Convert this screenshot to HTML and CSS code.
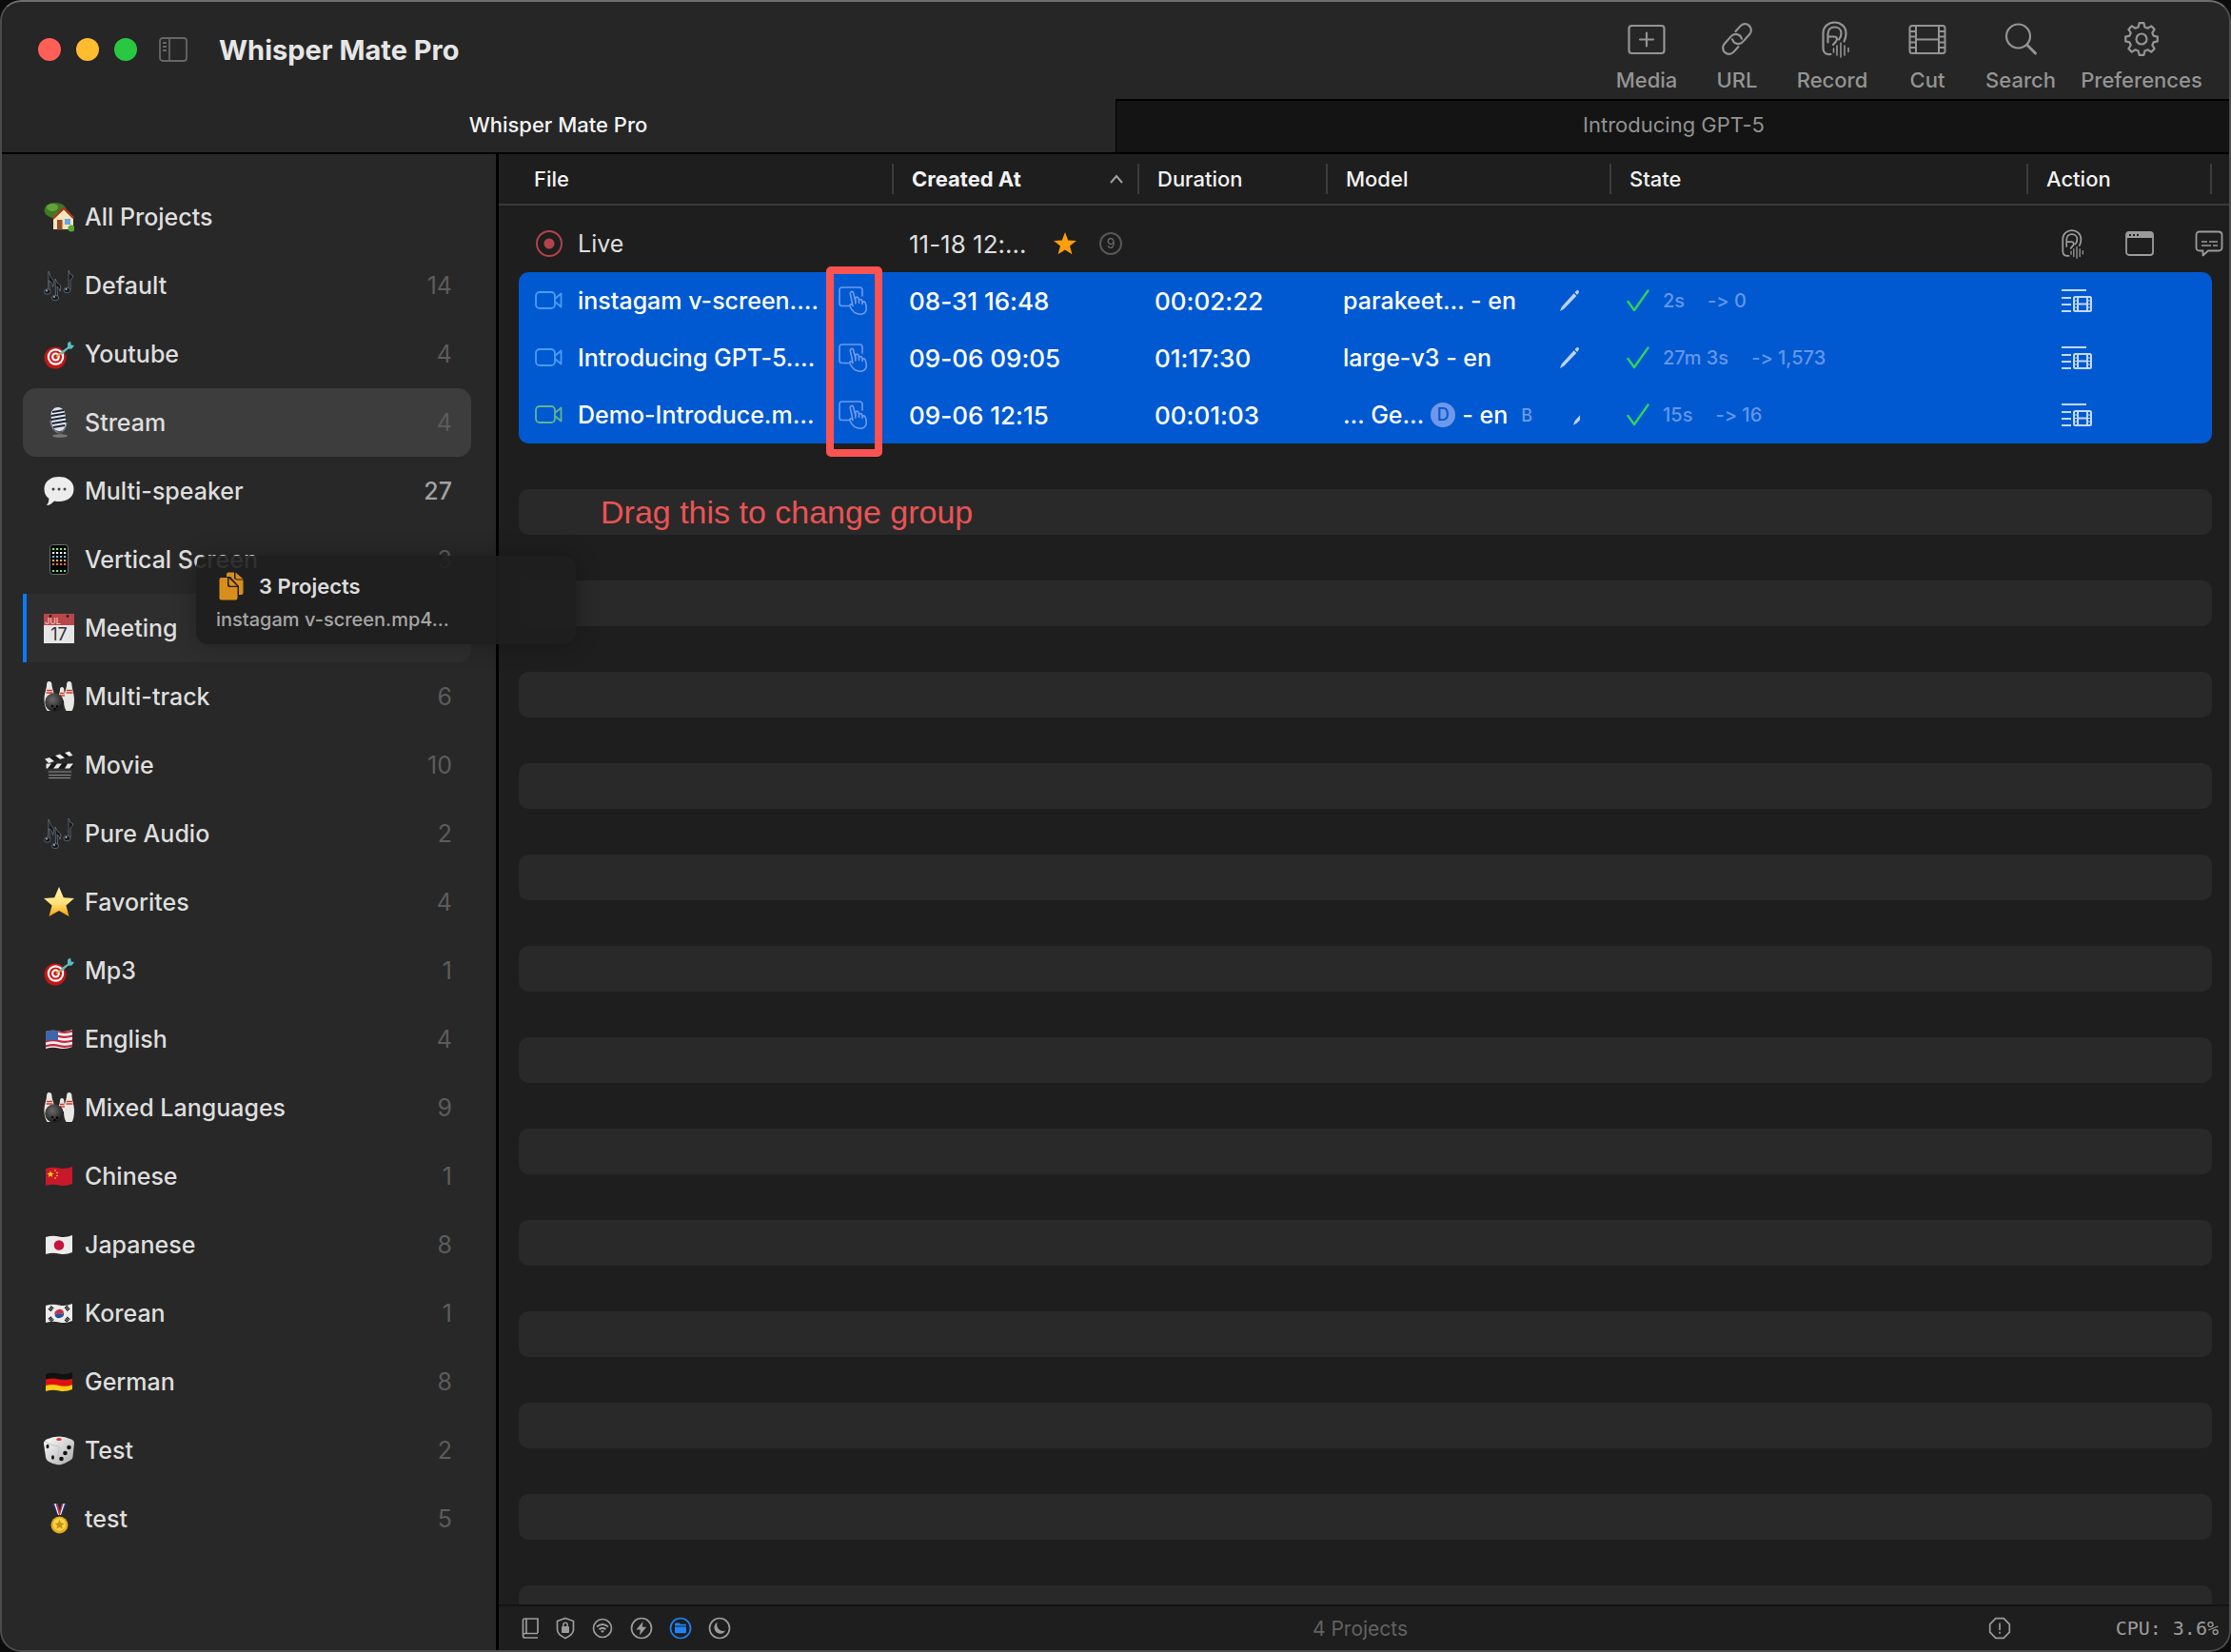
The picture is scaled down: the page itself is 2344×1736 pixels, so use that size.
FILE: index.html
```html
<!DOCTYPE html>
<html lang="en">
<head>
<meta charset="utf-8">
<title>Whisper Mate Pro</title>
<link rel="stylesheet" href="styles.css">
</head>
<body>
<svg class="sprite" aria-hidden="true">
  <defs>
    <linearGradient id="gold" x1="0" y1="0" x2="0" y2="1"><stop offset="0" stop-color="#fff6b0"/><stop offset=".55" stop-color="#ffe27a"/><stop offset="1" stop-color="#f5a300"/></linearGradient>
    <linearGradient id="silver" x1="0" y1="0" x2="1" y2="1"><stop offset="0" stop-color="#fff"/><stop offset="1" stop-color="#a9a9a9"/></linearGradient>
    <radialGradient id="ball" cx=".4" cy=".35" r=".7"><stop offset="0" stop-color="#6a6a6a"/><stop offset="1" stop-color="#161616"/></radialGradient>
    <clipPath id="flag"><path d="M2 8Q9 6 16 7.500T30 6V24Q23 27 16 25.500T2 26Z"/></clipPath>
  </defs>
  <symbol id="ear" viewBox="0 0 40 40"><g fill="none" stroke="currentColor" stroke-width="2.200" stroke-linecap="round"><path d="M32.500 22.500c1.500-3 2-6 2-8.500C34.500 7 29 2.500 22.500 2.500S10.500 7 10.500 14v16c0 4.500 3 6.800 8 6"/><path d="M15.500 23.500V15c0-5 3-7.500 7-7.500s7 2.500 7 6.500c0 3-1 5-2.500 6.500M16 17.500h6c3.500 0 3.500 3.500 2 5l-3 3.500"/><path stroke-width="1.600" d="M21.500 30v4M25 27v10M29 24v15M33 27v10M37 29.500v4"/></g></symbol>
  <symbol id="film" viewBox="0 0 40 40"><g fill="none" stroke="currentColor" stroke-width="2"><rect x="1.500" y="6" width="37" height="29" rx="2.500"/><path d="M8 6v29M32 6v29M8 20.500h24M1.500 12H8M1.500 17.500H8M1.500 23.500H8M1.500 29H8M32 12h6.500M32 17.500h6.500M32 23.500h6.500M32 29h6.500"/></g></symbol>
  <symbol id="video" viewBox="0 0 30 24"><g fill="none" stroke="currentColor" stroke-width="1.800" stroke-linejoin="round"><rect x="1" y="3" width="20" height="17" rx="4"/><path d="M21 10l6.500-5.500v14L21 13"/></g></symbol>
  <symbol id="hand" viewBox="0 0 32 30"><g fill="none" stroke="currentColor" stroke-width="1.600" stroke-linejoin="round" stroke-linecap="round"><path d="M10.500 20.500h-7A2.500 2.500 0 0 1 1 18V3.500A2.500 2.500 0 0 1 3.500 1h19A2.500 2.500 0 0 1 25 3.500V10"/><path d="M15 20.500L12.300 7.700c-.4-2.600 2.700-3.200 3.300-.8l2.200 8.600v-3c.4-1.900 3-1.700 3.300.2l.4 2c.3-1.700 2.800-1.500 3.200.3l.4 1.700c.7-1.400 2.700-1 3.100.8 2.300 6 1 11.500-5 11.700-6 .2-8.700-2.700-11.200-8.200-.8-2.500 1.600-3.200 3-.5z"/><path d="M17.800 15.500v2.500M21.500 15v2.500M25.100 17v1.500"/></g></symbol>
  <symbol id="pencil" viewBox="0 0 24 26"><path d="M1 25l2-5L17 4.500l3 3L5.500 22.500zM18 3.500l2.200-2.300q1.500-.7 2.300.3t.3 2L20.800 6.500z" fill="currentColor"/></symbol>
  <symbol id="check" viewBox="0 0 24 24"><path d="M1.500 13l6.500 9L22.500 1.500" fill="none" stroke="currentColor" stroke-width="2.400" stroke-linecap="round" stroke-linejoin="round"/></symbol>
  <symbol id="script" viewBox="0 0 32 26"><g fill="none" stroke="currentColor" stroke-width="2"><path d="M0 2h26M0 10h10M0 17h10M0 24h10"/><rect x="13" y="9" width="18" height="15" rx="1.500"/><path d="M17 9v15M27 9v15M17 16.500h10"/><path stroke-width="1" d="M13 13h4M13 16.500h4M13 20h4M27 13h4M27 16.500h4M27 20h4"/></g></symbol>
  <symbol id="e-house" viewBox="0 0 32 32"><ellipse cx="12" cy="9" rx="11.500" ry="8" fill="#3d7a22"/><ellipse cx="9" cy="6" rx="6" ry="4" fill="#63a33a"/><path d="M10 16l11-10 10 10v13H10z" fill="#f3e5bd"/><path d="M8.500 17L21 5l11 11.500-1.500 1.500L21 8.500 10.500 18.500z" fill="#a63a1e"/><rect x="14" y="19" width="5.500" height="10.500" fill="#9c4a25"/><rect x="22" y="18" width="6" height="6" fill="#6aa7e0"/><circle cx="29" cy="28" r="3.500" fill="#5da436"/></symbol>
  <symbol id="e-notes" viewBox="0 0 32 32"><g fill="#15181c" stroke="#69727c" stroke-width=".8"><path d="M5 1q1 5 5 9.500 1.500 3-.5 7 0-4.500-4-7l1 11.500h-2z"/><path d="M12 9q1 4 5.500 7 1 3-.5 6-.5-3-3-5l.5 10.500h-2z"/><path d="M26 0q1 5 5 6-1 3-3 4v10h-2z"/><ellipse cx="3.800" cy="22.500" rx="3.400" ry="2.700"/><ellipse cx="12" cy="29" rx="3.600" ry="2.700"/><ellipse cx="24.500" cy="21" rx="3.600" ry="2.700"/></g><g fill="#b5cbe0"><circle cx="3" cy="21.500" r=".9"/><circle cx="11" cy="28" r=".9"/><circle cx="23.500" cy="20" r=".9"/></g></symbol>
  <symbol id="e-dart" viewBox="0 0 32 32"><ellipse cx="12" cy="20" rx="11.500" ry="11.500" fill="#c21717"/><ellipse cx="12.500" cy="19" rx="8.700" ry="8.700" fill="#fff"/><ellipse cx="12.500" cy="19" rx="6.600" ry="6.600" fill="#cb1c1c"/><ellipse cx="12.500" cy="19" rx="4.400" ry="4.500" fill="#fff"/><ellipse cx="12.500" cy="19" rx="2.300" ry="2.400" fill="#cb1c1c"/><path d="M13 19L25 10" stroke="#e5a52d" stroke-width="1.600"/><path d="M17 14.500l8-5.500L25 4.500l3-2 .8 4L32 7l-2.500 3.500-4 .2-6.500 6z" fill="#55bfc5"/></symbol>
  <symbol id="e-mic" viewBox="0 0 32 32"><rect x="8" y="0" width="15" height="25" rx="7.500" fill="#dfe5ef" transform="rotate(-6 16 12)"/><g stroke="#1c2230" stroke-width="1.800"><path d="M9 5l12-2M7.500 9l15-2.500M8 13l15-2.500M9 17l15-2.500M10 21l12-2"/></g><path d="M7 14q1 10 9 13 7-2 8-11" fill="none" stroke="#7c7f86" stroke-width="1.600"/><path d="M15 25h4v4h-4z" fill="#555"/><ellipse cx="17" cy="30" rx="8" ry="1.800" fill="#777"/></symbol>
  <symbol id="e-speech" viewBox="0 0 32 32"><path d="M16 1c9 0 15.500 5 15.500 13S25 27 16 27c-2 0-3.500-.2-5-.6Q7.500 30.500 3 31q2.500-3 2.500-7Q.5 20.500.5 14C.5 6 7 1 16 1z" fill="#ececec"/><g fill="#444"><circle cx="10" cy="14" r="1.500"/><circle cx="16" cy="14" r="1.500"/><circle cx="22" cy="14" r="1.500"/></g></symbol>
  <symbol id="e-phone" viewBox="0 0 32 32"><rect x="6.500" y=".5" width="19" height="31" rx="3" fill="#050505" stroke="#6f6f6f"/><g stroke-width="2.200" stroke-dasharray="2.200 1.800"><path d="M9 5h15" stroke="#7ee07e"/><path d="M9 9h15" stroke="#f4f4f4"/><path d="M9 13h15" stroke="#6cc1f2"/><path d="M9 17h15" stroke="#f5b35b"/><path d="M9 21h15" stroke="#ef6c6c"/><path d="M9 28h15" stroke="#5fe08c"/></g></symbol>
  <symbol id="e-bowl" viewBox="0 0 32 32"><g fill="#e9e7e3"><path d="M5.500 0q3 0 3 4c0 3 3 8 3 15s-1 10-2 12h-6C2 28 .5 25 .5 19s2.500-12 2.500-15q0-4 2.500-4z"/><path d="M26.500 0q3 0 3 4c0 3 2.500 9 2.500 15s-1 10-2.500 12h-6C22 28 21 25 21 19s3-12 3-15q0-4 2.500-4z"/><path d="M19 6q2.300 0 2.300 3c0 3 1.700 6 1.700 11h-8c0-5 2-8 2-11q0-3 2-3z"/></g><path d="M3 9.500h6M2.700 12h6.800M23.700 9.500H30M23.500 12h7M17 12.500h4.500M17 15h5" stroke="#d33b2c" stroke-width="1.300"/><circle cx="11" cy="22" r="9.800" fill="url(#ball)"/><circle cx="9" cy="26" r="1.200"/><circle cx="14" cy="26.500" r="1.200"/><circle cx="11.500" cy="29" r="1.200"/></symbol>
  <symbol id="e-clap" viewBox="0 0 32 32"><path d="M3 16h28l-2 15H4.500z" fill="#303030"/><path d="M1 9.500L28 1l2.500 5L4 14z" fill="#191919"/><path d="M1 9.500l5-1.500 5 4-6 2zM12 6l5-1.600 5 4-5 1.400zM22 3l5-1.500 3.500 4.500-4 .8z" fill="#e9e9e9"/><path d="M3 14.500h28v5H3z" fill="#191919"/><path d="M2.500 14.500H8l-4 5H2.500zM14 14.500h5l-4 5h-5zM25 14.500h6l-4 5h-5z" fill="#e9e9e9"/><path d="M5 23h24M5 26.500h23.500M5 29.500h23" stroke="#8a8a8a"/></symbol>
  <symbol id="e-star" viewBox="0 0 32 32"><path d="M16 0l4.800 11.300L32 12l-8.600 7.600L26.500 31 16 25 5.500 31l3.100-11.400L0 12l11.200-.7z" fill="url(#gold)"/></symbol>
  <symbol id="e-us" viewBox="0 0 32 32"><g clip-path="url(#flag)"><path d="M0 5h32v23H0z" fill="#f0f0f0"/><path d="M0 9Q9 6 16 8t16-1M0 14q9-3 16-1t16-1M0 19q9-3 16-1t16-1M0 24q9-3 16-1t16-1" fill="none" stroke="#c9263c" stroke-width="2.300"/><path d="M0 5h15v12Q8 16.500 0 18z" fill="#3f66ad"/></g></symbol>
  <symbol id="e-cn" viewBox="0 0 32 32"><g clip-path="url(#flag)"><path d="M0 5h32v23H0z" fill="#c8192b"/><path d="M7 10.500l1 2.300 2.500.1-2 1.600.7 2.500L7 15.500 4.800 17l.7-2.500-2-1.600 2.500-.1z" fill="#fcdc1e"/><g fill="#fcdc1e"><circle cx="12" cy="10" r=".8"/><circle cx="14" cy="12.500" r=".8"/><circle cx="14" cy="15.500" r=".8"/><circle cx="12" cy="18" r=".8"/></g></g></symbol>
  <symbol id="e-jp" viewBox="0 0 32 32"><g clip-path="url(#flag)"><path d="M0 5h32v23H0z" fill="#ececec"/><circle cx="16" cy="16.500" r="5.300" fill="#c4153d"/></g></symbol>
  <symbol id="e-kr" viewBox="0 0 32 32"><g clip-path="url(#flag)"><path d="M0 5h32v23H0z" fill="#ececec"/><path d="M11.500 18a5 5 0 0 1 9.500-3q-2.500 3-4.700 1.500t-4.800 1.500z" fill="#cc2d43"/><path d="M11.500 18q2.500-3 4.800-1.500T21 15a5 5 0 0 1-9.500 3z" fill="#28529c"/><path d="M6 13l3.500-4M23 9l3.500 4M6 20.500l3.500 4M23 24.500l3.500-4" stroke="#111" stroke-width="4" stroke-dasharray="1.300 .5"/></g></symbol>
  <symbol id="e-de" viewBox="0 0 32 32"><g clip-path="url(#flag)"><path d="M0 5h32v8H0z" fill="#111"/><path d="M0 14Q9 11.500 16 13.500T32 12v9H0z" fill="#dd1111"/><path d="M0 20.500q9-2.500 16-.5t16-1.500v10H0z" fill="#fccc16"/></g></symbol>
  <symbol id="e-dice" viewBox="0 0 32 32"><path d="M3 4.500Q16-1.500 29 4.500q3 1 3 4L30.500 23q-.3 2.500-2.500 3.500-6 3.500-9.500 4.500-2.500.7-5 0-6-1.500-9-3.500-2-1.500-2.500-4L0 9Q0 6 3 4.500z" fill="url(#silver)"/><path d="M1 6.500q5 4 15 5.500-1 8-.5 19" fill="none" stroke="#c4c4c4"/><ellipse cx="16" cy="4.500" rx="2.800" ry="1.500" fill="#e03434"/><g fill="#141414"><ellipse cx="4" cy="12" rx="1.500" ry="2.300"/><ellipse cx="9.500" cy="23.500" rx="1.500" ry="2.300"/><circle cx="26.500" cy="13" r="2.300"/><circle cx="22.500" cy="19" r="2.300"/><circle cx="18.500" cy="25" r="2.300"/></g></symbol>
  <symbol id="e-medal" viewBox="0 0 32 32"><path d="M9 0h5l4 12h-3.500zM24 0h-5l-4 12h3.500z" fill="#2a3b8f"/><path d="M11 0h1.500l4 12H15zM22 0h-1.500l-4 12H18z" fill="#f3f3f3"/><path d="M13 0h1.500l2.500 9 2-9H20l-3 12h-1z" fill="#cf2f3a"/><circle cx="16.500" cy="22.500" r="9" fill="#e3aa1d"/><circle cx="16.500" cy="22" r="6.800" fill="#f8d548"/><path d="M16.500 17l1.500 3.500 3.500.3-2.600 2.400.8 3.600-3.200-2-3.200 2 .8-3.600-2.600-2.400 3.500-.3z" fill="#c98f14"/></symbol>
</svg>

<div class="app">
  <header class="titlebar">
    <div class="lights">
      <button class="light red" aria-label="Close"></button>
      <button class="light amber" aria-label="Minimize"></button>
      <button class="light green" aria-label="Zoom"></button>
    </div>
    <button class="panel-toggle" aria-label="Toggle sidebar"><svg width="30" height="26" viewBox="0 0 30 26" fill="none" stroke="currentColor" stroke-width="1.800"><rect x="1" y="1" width="28" height="24" rx="3"/><path d="M11 1v24M4 6h4M4 10h4M4 14h4"/></svg></button>
    <h1 class="app-title">Whisper Mate Pro</h1>
    <div class="toolbar">
      <button class="tool"><svg class="tool-icon" viewBox="0 0 40 40" fill="none" stroke="currentColor" stroke-width="2.200" stroke-linecap="round"><rect x="1.500" y="6" width="37" height="29" rx="3"/><path d="M13 20.500h14M20 13.500v14"/></svg>Media</button>
      <button class="tool"><svg class="tool-icon" viewBox="0 0 40 40" fill="none" stroke="currentColor" stroke-width="2.200" stroke-linecap="round"><g transform="rotate(-48 20 20)"><path d="M15 26.500H7.500a6.500 6.500 0 0 1 0-13H18a6.500 6.500 0 0 1 5.500 10"/><path d="M25 13.500h7.500a6.500 6.500 0 0 1 0 13H22a6.500 6.500 0 0 1-5.500-10"/></g></svg>URL</button>
      <button class="tool"><svg class="tool-icon"><use href="#ear"/></svg>Record</button>
      <button class="tool"><svg class="tool-icon"><use href="#film"/></svg>Cut</button>
      <button class="tool"><svg class="tool-icon" viewBox="0 0 40 40" fill="none" stroke="currentColor" stroke-width="2.200" stroke-linecap="round"><circle cx="17.500" cy="17" r="12.500"/><path d="M26.500 26L35.500 35" stroke-width="3"/></svg>Search</button>
      <button class="tool"><svg class="tool-icon" viewBox="0 0 40 40" fill="none" stroke="currentColor" stroke-width="2.200" stroke-linejoin="round"><path d="M22.400 3.200L23.400 7.400 26.500 8.700 30.200 6.400 33.600 9.800 31.300 13.500 32.600 16.600 36.800 17.600V22.400L32.600 23.400 31.300 26.500 33.600 30.200 30.200 33.600 26.500 31.300 23.400 32.600 22.400 36.800H17.600L16.600 32.600 13.500 31.300 9.800 33.600 6.400 30.200 8.700 26.500 7.400 23.400 3.200 22.400V17.600L7.400 16.600 8.700 13.500 6.400 9.800 9.800 6.400 13.500 8.700 16.600 7.400 17.600 3.200Z"/><circle cx="20" cy="20" r="5.500"/></svg>Preferences</button>
    </div>
  </header>
  <nav class="tabs" aria-label="Windows">
    <button class="tab active">Whisper Mate Pro</button>
    <button class="tab">Introducing GPT-5</button>
  </nav>

  <div class="body">
    <nav class="sidebar" aria-label="Groups">
      <button class="group"><svg class="emoji"><use href="#e-house"/></svg><span>All Projects</span></button>
      <button class="group"><svg class="emoji"><use href="#e-notes"/></svg><span>Default</span><span class="count">14</span></button>
      <button class="group"><svg class="emoji"><use href="#e-dart"/></svg><span>Youtube</span><span class="count">4</span></button>
      <button class="group selected"><svg class="emoji"><use href="#e-mic"/></svg><span>Stream</span><span class="count">4</span></button>
      <button class="group"><svg class="emoji"><use href="#e-speech"/></svg><span>Multi-speaker</span><span class="count strong">27</span></button>
      <button class="group"><svg class="emoji"><use href="#e-phone"/></svg><span>Vertical Screen</span><span class="count">3</span></button>
      <button class="group drop"><svg class="emoji" viewBox="0 0 32 32"><path d="M0 1h32v31H0z" fill="#e6e6e6"/><path d="M0 1h32v12H0z" fill="#b9474a"/><circle cx="7" cy="3.500" r="1.400" fill="#222"/><circle cx="25" cy="3.500" r="1.400" fill="#222"/><text x="1" y="12" class="cal-month">JUL</text><text x="16" y="29" text-anchor="middle" class="cal-day">17</text></svg><span>Meeting</span></button>
      <button class="group"><svg class="emoji"><use href="#e-bowl"/></svg><span>Multi-track</span><span class="count">6</span></button>
      <button class="group"><svg class="emoji"><use href="#e-clap"/></svg><span>Movie</span><span class="count">10</span></button>
      <button class="group"><svg class="emoji"><use href="#e-notes"/></svg><span>Pure Audio</span><span class="count">2</span></button>
      <button class="group"><svg class="emoji"><use href="#e-star"/></svg><span>Favorites</span><span class="count">4</span></button>
      <button class="group"><svg class="emoji"><use href="#e-dart"/></svg><span>Mp3</span><span class="count">1</span></button>
      <button class="group"><svg class="emoji"><use href="#e-us"/></svg><span>English</span><span class="count">4</span></button>
      <button class="group"><svg class="emoji"><use href="#e-bowl"/></svg><span>Mixed Languages</span><span class="count">9</span></button>
      <button class="group"><svg class="emoji"><use href="#e-cn"/></svg><span>Chinese</span><span class="count">1</span></button>
      <button class="group"><svg class="emoji"><use href="#e-jp"/></svg><span>Japanese</span><span class="count">8</span></button>
      <button class="group"><svg class="emoji"><use href="#e-kr"/></svg><span>Korean</span><span class="count">1</span></button>
      <button class="group"><svg class="emoji"><use href="#e-de"/></svg><span>German</span><span class="count">8</span></button>
      <button class="group"><svg class="emoji"><use href="#e-dice"/></svg><span>Test</span><span class="count">2</span></button>
      <button class="group"><svg class="emoji"><use href="#e-medal"/></svg><span>test</span><span class="count">5</span></button>
    </nav>

    <main class="main">
      <table class="projects">
        <colgroup><col class="c-file"><col class="c-created"><col class="c-duration"><col class="c-model"><col class="c-state"><col class="c-action"></colgroup>
        <thead>
          <tr><th>File</th><th class="sorted"><span class="cell">Created At<svg class="caret" width="14" height="10" viewBox="0 0 14 10"><path d="M1 9l6-7 6 7" fill="none" stroke="currentColor" stroke-width="2"/></svg></span></th><th>Duration</th><th>Model</th><th>State</th><th>Action</th></tr>
        </thead>
        <tbody>
          <tr class="live">
            <td><div class="cell name"><svg class="rec" width="30" height="30" viewBox="0 0 30 30"><circle cx="15" cy="15" r="13" fill="none" stroke="currentColor" stroke-width="2"/><circle cx="15" cy="15" r="5.500" fill="currentColor"/></svg><span>Live</span></div></td>
            <td class="num"><div class="cell"><span>11-18 12:…</span><span class="marks"><svg width="24" height="24" viewBox="0 0 24 24"><path d="M12 0l3.200 8.500 8.800.4-7 5.600 2.400 8.800L12 18.500l-7.400 4.800L7 14.500 0 8.900l8.800-.4z" fill="#ff9f0a"/></svg><span class="ring">9</span></span></div></td>
            <td></td><td></td><td></td>
            <td><div class="cell live-actions">
              <button class="act" aria-label="Record"><svg width="24" height="31" viewBox="9 1 30 39"><use href="#ear" width="40" height="40"/></svg></button>
              <button class="act" aria-label="Window"><svg width="30" height="30" viewBox="0 0 30 30"><rect x="1" y="3" width="28" height="24" rx="3" fill="none" stroke="currentColor" stroke-width="1.800"/><path d="M1 9V6q0-3 3-3h22q3 0 3 3v3z" fill="currentColor"/><path d="M4 6h2M8 6h2M12 6h2" stroke="#1e1e1e" stroke-width="2"/></svg></button>
              <button class="act" aria-label="Captions"><svg width="30" height="30" viewBox="0 0 30 30" fill="none" stroke="currentColor" stroke-width="1.800" stroke-linejoin="round"><path d="M5 2.500h20q3.500 0 3.500 3.500v13q0 3.500-3.500 3.500H14l-5.500 5v-5H5q-3.500 0-3.500-3.500V6q0-3.500 3.500-3.500z"/><path stroke-width="1.500" d="M7 13h6M15 13h9M7 17h10M19 17h5"/></svg></button>
            </div></td>
          </tr>
          <tr class="picked first">
            <td><div class="cell name"><svg class="vid" width="30" height="24"><use href="#video"/></svg><span>instagam v-screen.…</span><svg class="grip" width="32" height="30"><use href="#hand"/></svg></div></td>
            <td class="num">08-31 16:48</td><td class="num">00:02:22</td>
            <td><div class="cell"><span>parakeet… - en</span><button class="edit" aria-label="Edit"><svg width="22" height="24"><use href="#pencil"/></svg></button></div></td>
            <td><div class="cell state"><svg class="ok" width="24" height="24"><use href="#check"/></svg><span>2s</span><span class="lines">-&gt; 0</span></div></td>
            <td><button class="act" aria-label="Open"><svg width="32" height="26"><use href="#script"/></svg></button></td>
          </tr>
          <tr class="picked">
            <td><div class="cell name"><svg class="vid" width="30" height="24"><use href="#video"/></svg><span>Introducing GPT-5.…</span><svg class="grip" width="32" height="30"><use href="#hand"/></svg></div></td>
            <td class="num">09-06 09:05</td><td class="num">01:17:30</td>
            <td><div class="cell"><span>large-v3 - en</span><button class="edit" aria-label="Edit"><svg width="22" height="24"><use href="#pencil"/></svg></button></div></td>
            <td><div class="cell state"><svg class="ok" width="24" height="24"><use href="#check"/></svg><span>27m 3s</span><span class="lines">-&gt; 1,573</span></div></td>
            <td><button class="act" aria-label="Open"><svg width="32" height="26"><use href="#script"/></svg></button></td>
          </tr>
          <tr class="picked last">
            <td><div class="cell name"><svg class="vid green-vid" width="30" height="24"><use href="#video"/></svg><span>Demo-Introduce.m…</span><svg class="grip" width="32" height="30"><use href="#hand"/></svg></div></td>
            <td class="num">09-06 12:15</td><td class="num">00:01:03</td>
            <td><div class="cell model-tags"><span>… Ge…</span><span class="disc">D</span><span>- en</span><span class="tag">B</span><button class="edit" aria-label="Edit"><svg width="8" height="24" viewBox="0 0 9 26"><use href="#pencil" width="24" height="26"/></svg></button></div></td>
            <td><div class="cell state"><svg class="ok" width="24" height="24"><use href="#check"/></svg><span>15s</span><span class="lines">-&gt; 16</span></div></td>
            <td><button class="act" aria-label="Open"><svg width="32" height="26"><use href="#script"/></svg></button></td>
          </tr>
        </tbody>
      </table>

      <div class="stripes" aria-hidden="true"><i></i><i></i><i></i><i></i><i></i><i></i><i></i><i></i><i></i><i></i><i></i><i></i><i></i></div>

      <div class="frame"></div>
      <p class="hint">Drag this to change group</p>

      <footer class="status">
        <div class="status-icons">
          <button class="st" aria-label="Library"><svg width="20" height="24" viewBox="2 0 20 24" fill="none" stroke="currentColor" stroke-width="1.700"><path d="M20 17V2H6Q4.500 2 4.500 4v16q0 2 2 2H20M4.500 20q0-2.500 2-2.500h13.500M8 2v15.500"/></svg></button>
          <button class="st" aria-label="Privacy"><svg width="20" height="24" viewBox="2 0 20 24"><path d="M12 1.500l8.500 3v9q0 5-8.500 9-8.500-4-8.500-9v-9z" fill="none" stroke="currentColor" stroke-width="1.700"/><rect x="8" y="10" width="8" height="7" rx="1" fill="currentColor"/><path d="M9.800 10V8.500a2.200 2.200 0 0 1 4.400 0V10" fill="none" stroke="currentColor" stroke-width="1.500"/></svg></button>
          <button class="st" aria-label="Network"><svg width="24" height="24" viewBox="0 0 24 24" fill="none" stroke="currentColor" stroke-width="1.700"><circle cx="12" cy="12" r="9.500"/><path d="M6 10.500q6-5 12 0M8.500 13.300q3.500-2.800 7 0" stroke-width="2"/><path d="M10 15q2-1.500 4 0l-2 2z" fill="currentColor" stroke="none"/></svg></button>
          <button class="st" aria-label="Power"><svg width="24" height="24" viewBox="0 0 24 24"><circle cx="12" cy="12" r="10.500" fill="none" stroke="currentColor" stroke-width="1.700"/><path d="M13.500 5L6.500 13.500h4.300L10 19.500l7.200-8.800h-4.400z" fill="currentColor"/></svg></button>
          <button class="st on" aria-label="Folder"><svg width="24" height="24" viewBox="0 0 24 24"><circle cx="12" cy="12" r="10.500" fill="none" stroke="currentColor" stroke-width="1.700"/><path d="M6 7.500q0-1 1-1h3.500l1.500 1.300h5q1 0 1 1V9.500H6zM6 10.500h12V16q0 1.200-1.200 1.200H7.200Q6 17.200 6 16z" fill="currentColor"/></svg></button>
          <button class="st" aria-label="Sleep"><svg width="24" height="24" viewBox="0 0 24 24"><circle cx="12" cy="12" r="10.500" fill="none" stroke="currentColor" stroke-width="1.700"/><path d="M9.800 5.800a6.300 6.300 0 1 0 8.400 8.600 6.500 6.500 0 0 1-8.400-8.600z" fill="currentColor"/></svg></button>
        </div>
        <span class="total">4 Projects</span>
        <div class="status-right">
          <button class="st" aria-label="Alerts"><svg width="24" height="24" viewBox="0 0 24 24" fill="none" stroke="currentColor" stroke-width="1.700"><path d="M7.800 1.700h8.400l6.100 6.100v8.400l-6.100 6.100H7.800l-6.100-6.100V7.800zM12 6.500v7.500M12 15.800v2"/></svg></button>
          <span class="cpu">CPU: 3.6%</span>
        </div>
      </footer>
    </main>
  </div>

  <div class="drag-card">
    <div class="drag-title"><svg width="26" height="30" viewBox="0 0 26 30"><path d="M8 5V2.500Q8 .5 10 .5h6v6.500l3 1.500h6.500V22q0 2-2 2H21V15L12 5z" fill="#d98e1c"/><path d="M17.500.5L25.500 7.500h-6q-2 0-2-2z" fill="#d98e1c"/><path d="M.5 8q0-2 2-2H9v8q0 2 2 2h8.500v11.500q0 2-2 2h-15q-2 0-2-2z" fill="#d98e1c"/><path d="M10.500 6.500l8.500 8.200h-6.500q-2 0-2-2z" fill="#d98e1c"/></svg>3 Projects</div>
    <div class="drag-sub">instagam v-screen.mp4...</div>
  </div>
</div>
</body>
</html>
```
FILE: styles.css
```css
* { box-sizing: border-box; }

body {
  margin: 0;
  background: #0c0c0c;
  color: #dedede;
  font-family: Inter, "Liberation Sans", sans-serif;
  font-size: 25px;
  font-variant-ligatures: no-contextual;
}

button {
  margin: 0;
  padding: 0;
  border: 0;
  background: none;
  color: inherit;
  font: inherit;
}

svg { display: block; flex: none; }

.sprite { position: absolute; width: 0; height: 0; }

.app {
  position: relative;
  display: flex;
  flex-direction: column;
  min-height: 100vh;
  overflow: hidden;
  border-radius: 22px;
  background: #1e1e1e;
}

/* window outline drawn over the content */
.app::after {
  content: "";
  position: absolute;
  inset: 0;
  border: 2px solid #4c4c4c;
  border-top-color: #6e6e6e;
  border-radius: 22px;
  pointer-events: none;
}

/* title bar */
.titlebar {
  display: flex;
  align-items: center;
  height: 104px;
  padding: 0 15px 0 40px;
  background: #262626;
}

.lights { display: flex; gap: 16px; }
.light { width: 24px; height: 24px; border-radius: 50%; }
.red { background: #ff5f57; }
.amber { background: #febc2e; }
.green { background: #28c840; }

.panel-toggle { margin-left: 23px; color: #666; }

.app-title {
  margin: 0 auto 0 33px;
  font-size: 29px;
  font-weight: 700;
  color: #e6e6e6;
}

.toolbar {
  display: grid;
  grid-template-columns: 90px 100px 100px 100px 96px 158px;
  padding-top: 14px;
}

.tool {
  display: flex;
  flex-direction: column;
  align-items: center;
  gap: 9px;
  color: #949494;
  font-size: 22px;
  font-weight: 500;
  line-height: 28px;
}

.tool-icon { width: 40px; height: 40px; }

/* window tabs */
.tabs {
  display: flex;
  height: 58px;
  border-bottom: 2px solid #000;
}

.tab {
  flex: 1;
  padding-bottom: 4px;
  border: solid #000;
  border-width: 2px 0 0 1px;
  background: #141414;
  color: #929292;
  font-size: 22px;
}

.tab.active {
  border-color: #262626;
  background: #262626;
  color: #f4f4f4;
  font-weight: 500;
}

.body { display: flex; flex: 1; }

/* sidebar */
.sidebar {
  flex: none;
  width: 524px;
  padding: 30px 26px 30px 24px;
  border-right: 3px solid #000;
  background: #282828;
}

.group {
  display: flex;
  align-items: center;
  gap: 11px;
  width: 100%;
  height: 72px;
  padding: 0 20px 0 22px;
  border-radius: 14px;
  font-weight: 500;
  text-align: left;
}

.group.selected { background: #3d3d3d; }

.group.drop {
  border-left: 4px solid #0a7aff;
  border-radius: 0 14px 14px 0;
  padding-left: 18px;
  background: #2e2e2e;
}

.emoji { width: 32px; height: 32px; }
.count { margin-left: auto; color: #5c5c5c; font-weight: 400; }
.count.strong { color: #a2a2a2; font-weight: 500; }
.cal-month { font: 600 9px Inter, sans-serif; fill: #e9b4b4; }
.cal-day { font: 18px Inter, sans-serif; fill: #333; }

/* project table */
.main {
  position: relative;
  display: flex;
  flex: 1;
  flex-direction: column;
  min-width: 0;
}

.projects {
  width: 100%;
  table-layout: fixed;
  border-collapse: separate;
  border-spacing: 0;
}

.c-file { width: 413px; }
.c-created { width: 258px; }
.c-duration { width: 198px; }
.c-model { width: 298px; }
.c-action { width: 215px; }

th {
  height: 54px;
  padding: 0 0 0 21px;
  border-bottom: 2px solid #3a3a3a;
  background: linear-gradient(#3c3c3c, #3c3c3c) no-repeat left center / 2px 32px;
  color: #f2f2f2;
  font-size: 22px;
  font-weight: 500;
  text-align: left;
}

th:first-child { padding-left: 37px; background: none; }

th:last-child {
  background:
    linear-gradient(#3c3c3c, #3c3c3c) no-repeat left center / 2px 32px,
    linear-gradient(#3c3c3c, #3c3c3c) no-repeat right 20px center / 2px 32px;
}

.sorted { font-weight: 700; }
.caret { margin: 0 15px 0 auto; color: #a0a0a0; }

.cell {
  display: flex;
  align-items: center;
  white-space: nowrap;
}

td {
  height: 60px;
  padding: 0 0 0 18px;
  white-space: nowrap;
}

.num { font-size: 26px; }

td:first-child {
  padding-left: 17px;
  border-left: 21px solid transparent;
}

td:last-child {
  padding-left: 37px;
  border-right: 20px solid transparent;
}

.live td { height: 70px; padding-top: 10px; }

.picked td {
  background: #0059d1;
  background-clip: padding-box;
  color: #fff;
  font-weight: 500;
}

.first td:first-child { border-top-left-radius: 31px 10px; }
.first td:last-child { border-top-right-radius: 30px 10px; }
.last td:first-child { border-bottom-left-radius: 31px 10px; }
.last td:last-child { border-bottom-right-radius: 30px 10px; }

.name { gap: 15px; }
.rec { color: #b0444a; }
.vid { color: #4c9bf5; }
.green-vid { color: #62b58e; }
.grip { margin: 0 24px 0 auto; color: #6f9bec; }

.marks {
  display: flex;
  align-items: center;
  gap: 24px;
  margin: 0 16px 0 auto;
}

.ring {
  width: 24px;
  height: 24px;
  border: 2px solid #575757;
  border-radius: 50%;
  color: #6a6a6a;
  font-size: 14px;
  line-height: 20px;
  text-align: center;
}

.edit { margin: 0 31px 0 auto; color: #bcd3f6; }
.model-tags { gap: 7px; }

.disc {
  width: 26px;
  height: 26px;
  border-radius: 50%;
  background: #6f98e8;
  color: #0059d1;
  font-size: 18px;
  line-height: 26px;
  text-align: center;
}

.tag { margin-left: 7px; color: #6e9be9; font-size: 18px; }

.state { color: #6496e8; font-size: 20px; }
.ok { margin-right: 14px; color: #32d25c; }
.lines { margin-left: 24px; }

.act { display: block; color: #c3d9f8; }
.live-actions { color: #9b9b9b; gap: 43px; }
.live-actions .act { color: inherit; }

/* empty rows */
.stripes {
  display: flex;
  flex: 1 1 0;
  flex-direction: column;
  gap: 48px;
  min-height: 0;
  padding: 48px 20px 0 21px;
  overflow: hidden;
}

.stripes i {
  flex: none;
  height: 48px;
  border-radius: 10px;
  background: #292929;
}

/* annotation */
.frame {
  position: absolute;
  left: 344px;
  top: 118px;
  width: 59px;
  height: 200px;
  border: 8px solid #fb5252;
  border-radius: 5px;
}

.hint {
  position: absolute;
  left: 107px;
  top: 354px;
  margin: 0;
  color: #ea5454;
  font-family: "Liberation Sans", sans-serif;
  font-size: 34px;
  line-height: 44px;
}

/* status bar */
.status {
  display: grid;
  grid-template-columns: 1fr auto 1fr;
  align-items: center;
  height: 50px;
  padding: 0 13px 2px 3px;
  border-top: 2px solid #141414;
  color: #9c9c9c;
}

.status-icons { display: flex; gap: 17px; padding-left: 20px; }
.on { color: #1f82f0; }
.total { color: #626262; font-size: 21px; }

.status-right {
  display: flex;
  align-items: center;
  justify-content: flex-end;
  gap: 110px;
}

.cpu { font-family: "DejaVu Sans Mono", monospace; font-size: 20px; }

/* dragged projects */
.drag-card {
  position: absolute;
  left: 206px;
  top: 584px;
  width: 399px;
  height: 93px;
  padding: 15px 21px;
  border-radius: 12px;
  background: rgba(30, 30, 30, 0.9);
  box-shadow: 0 0 24px rgba(0, 0, 0, 0.25);
}

.drag-title {
  display: flex;
  align-items: center;
  gap: 16px;
  padding-left: 3px;
  color: #dcdcdc;
  font-size: 22px;
  font-weight: 600;
  line-height: 34px;
}

.drag-sub { color: #a6a6a6; font-size: 20px; font-weight: 500; line-height: 36px; }
```
